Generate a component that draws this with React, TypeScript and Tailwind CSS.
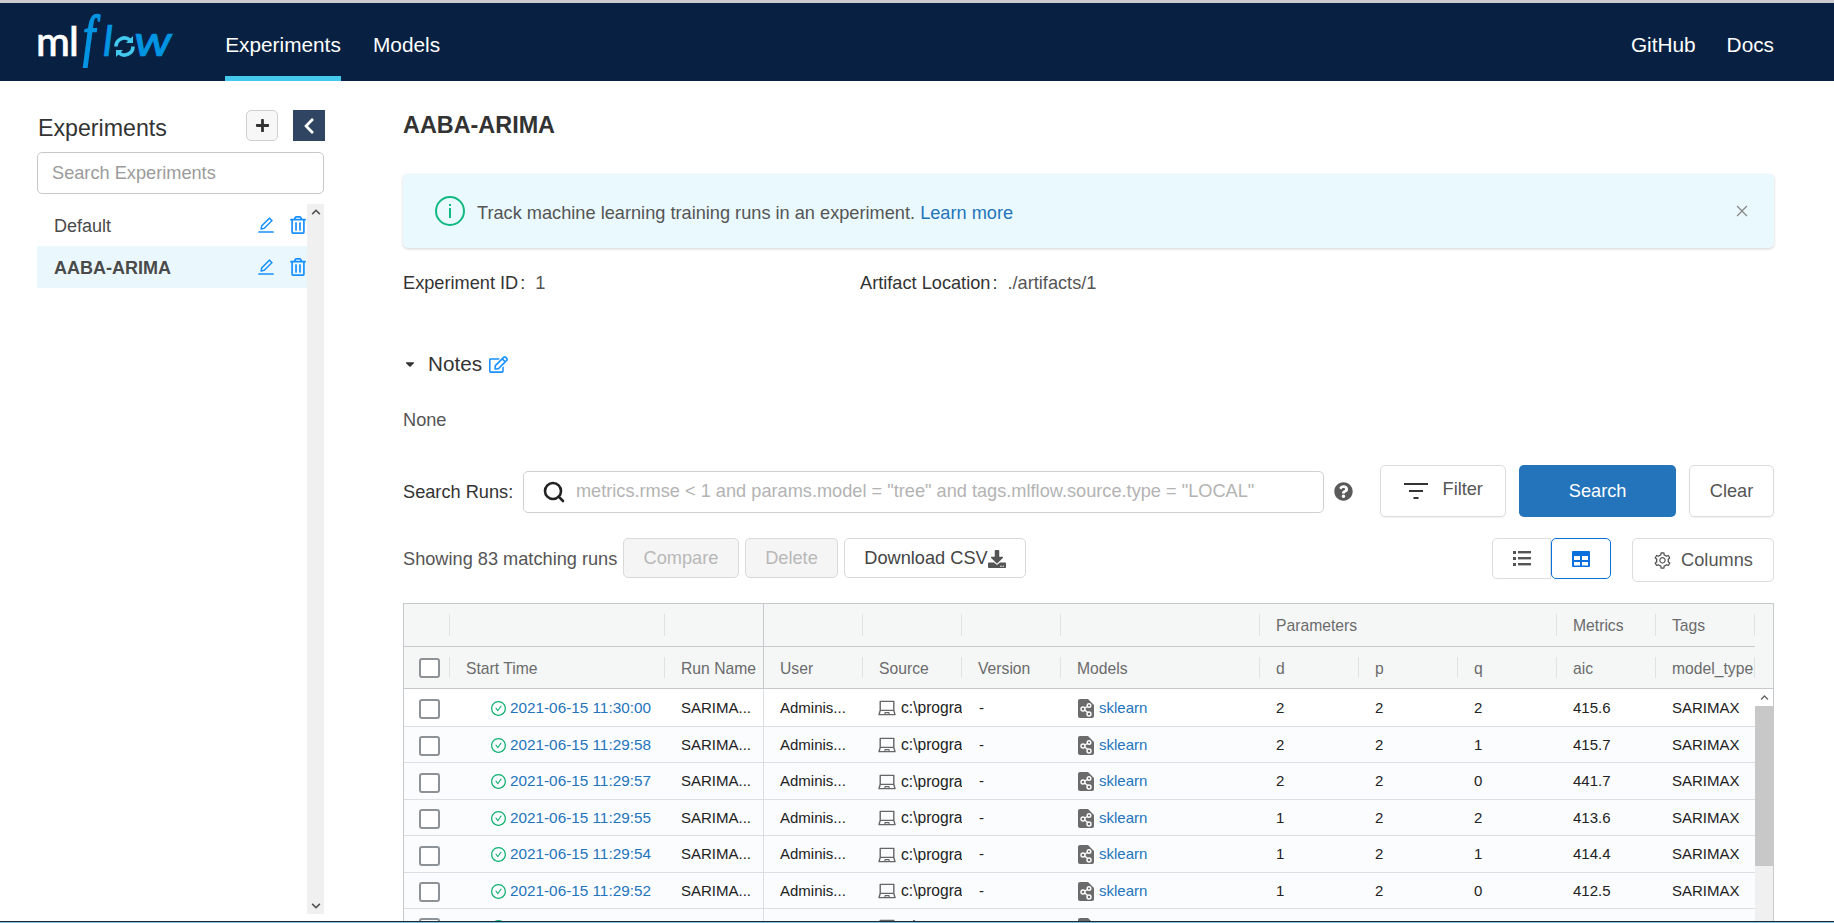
import { FaChevronLeft, FaChevronUp, FaChevronDown, FaPlus, FaQuestionCircle, FaRegEdit, FaRegTrashAlt, FaDownload, FaCaretDown } from "react-icons/fa";
import { AiOutlineCheckCircle, AiOutlineClose, AiOutlineEdit, AiOutlineLaptop, AiOutlineSetting } from "react-icons/ai";
import { Search } from "lucide-react";

const font = "font-['Liberation_Sans',Arial,sans-serif]";
const cols = "grid grid-cols-[46px_215px_99px_99px_99px_99px_199px_99px_99px_99px_99px_99px]";

const runs = [
  { time: "2021-06-15 11:30:00", d: "2", p: "2", q: "2", aic: "415.6", h: "h-[38px]" },
  { time: "2021-06-15 11:29:58", d: "2", p: "2", q: "1", aic: "415.7", h: "h-[36px]" },
  { time: "2021-06-15 11:29:57", d: "2", p: "2", q: "0", aic: "441.7", h: "h-[37px]" },
  { time: "2021-06-15 11:29:55", d: "1", p: "2", q: "2", aic: "413.6", h: "h-[36px]" },
  { time: "2021-06-15 11:29:54", d: "1", p: "2", q: "1", aic: "414.4", h: "h-[37px]" },
  { time: "2021-06-15 11:29:52", d: "1", p: "2", q: "0", aic: "412.5", h: "h-[36px]" },
  { time: "2021-06-15 11:29:50", d: "1", p: "2", q: "0", aic: "412.1", h: "h-[36px]" },
];

function Logo() {
  return (
    <svg width="150" height="60" viewBox="0 0 150 60" className="ml-[30px] mt-[-1px] shrink-0">
      <text x="6" y="44" fontFamily="Lato, sans-serif" fontWeight="500" fontSize="41" letterSpacing="-1" fill="#ffffff" stroke="#ffffff" strokeWidth="0.6">ml</text>
      <text transform="translate(53,43) scale(0.75,1)" fontFamily="Liberation Serif, serif" fontStyle="italic" fontSize="58" fill="#0194e2" stroke="#0194e2" strokeWidth="1.8">f</text>
      <text x="73" y="44" fontFamily="Lato, sans-serif" fontStyle="italic" fontWeight="500" fontSize="42" fill="#0194e2" stroke="#0194e2" strokeWidth="0.6">l</text>
      <g fill="none" stroke="#43c9ed" strokeWidth="3.6">
        <path d="M86 34.5a8.5 8.5 0 0 1 14-6.5" />
        <path d="M103 34.5a8.5 8.5 0 0 1-14 6.5" />
      </g>
      <path d="M103 24v7h-7z" fill="#43c9ed" />
      <path d="M86 45v-7h7z" fill="#43c9ed" />
      <text x="104" y="44" fontFamily="Lato, sans-serif" fontStyle="italic" fontWeight="500" fontSize="42" fill="#0194e2" stroke="#0194e2" strokeWidth="0.6" textLength="38" lengthAdjust="spacingAndGlyphs">w</text>
    </svg>
  );
}

function ModelIcon() {
  return (
    <svg width="16" height="19" viewBox="0 0 16 19" className="shrink-0">
      <path d="M2 0h8l6 6v11a2 2 0 0 1-2 2H2a2 2 0 0 1-2-2V2a2 2 0 0 1 2-2z" fill="#6b6b6b" />
      <g stroke="#fff" strokeWidth="1.4" fill="#6b6b6b">
        <path d="M6 9.5l5-3M6 10.5l5 4" fill="none" />
        <circle cx="5" cy="10" r="2" />
        <circle cx="11" cy="6.5" r="1.8" />
        <circle cx="11" cy="15" r="2" />
      </g>
    </svg>
  );
}

function FilterIcon() {
  return (
    <svg width="24" height="17" viewBox="0 0 24 17" className="shrink-0">
      <rect x="0" y="0" width="24" height="2" fill="#333" />
      <rect x="5" y="7" width="14" height="2" fill="#333" />
      <rect x="9.5" y="14" width="5" height="2" fill="#333" />
    </svg>
  );
}

function ListIcon() {
  return (
    <svg width="18" height="15" viewBox="0 0 18 15">
      <rect x="0" y="0" width="3" height="3" fill="#555" />
      <rect x="5" y="0" width="13" height="2.4" fill="#555" />
      <rect x="0" y="6" width="3" height="3" fill="#555" />
      <rect x="5" y="6" width="13" height="2.4" fill="#555" />
      <rect x="0" y="12" width="3" height="3" fill="#555" />
      <rect x="5" y="12" width="13" height="2.4" fill="#555" />
    </svg>
  );
}

function TableIcon() {
  return (
    <svg width="18" height="16" viewBox="0 0 18 16">
      <rect x="0" y="0" width="18" height="16" rx="1" fill="#0b6fdc" />
      <rect x="2" y="5" width="6" height="4" fill="#fff" />
      <rect x="10" y="5" width="6" height="4" fill="#fff" />
      <rect x="2" y="11" width="6" height="3.5" fill="#fff" />
      <rect x="10" y="11" width="6" height="3.5" fill="#fff" />
    </svg>
  );
}

function Checkbox() {
  return <div className="w-[21px] h-[20px] border-2 border-[#8d9296] rounded-[3px] bg-white" />;
}

function HeadCell({ label, last }: { label?: string; last?: boolean }) {
  return (
    <div className="relative flex items-center pl-[16px] pt-[2px] text-[#6b6b6b] whitespace-nowrap overflow-hidden">
      {label}
      {!last && <div className="absolute right-0 top-[10px] bottom-[10px] w-px bg-[#dfe3e5]" />}
    </div>
  );
}

function HeadCellFull({ label }: { label: string }) {
  return (
    <div className="relative h-full flex items-center pl-[16px] pt-[2px] text-[#6b6b6b]">
      {label}
      <div className="absolute right-0 top-[10px] bottom-[10px] w-px bg-[#dfe3e5]" />
    </div>
  );
}

function ExperimentRow({ name, active }: { name: string; active?: boolean }) {
  return (
    <div className={`h-[42px] flex items-center pl-[17px] pr-[1px] text-[18px] text-[#4a4a4a] ${active ? "bg-[#eaf8fd] font-bold" : ""}`}>
      <span className="flex-1 pt-[2px]">{name}</span>
      <AiOutlineEdit className="text-[#1890ff] w-[20px] h-[20px] mr-[14px]" />
      <FaRegTrashAlt className="text-[#1890ff] w-[16px] h-[18px]" />
    </div>
  );
}

export default function App() {
  return (
    <div className={`${font} h-[923px] flex flex-col overflow-hidden bg-white text-[18.2px] text-[#333]`}>
      <div className="h-[3px] bg-[#c9cbce]" />
      <header className="h-[78px] bg-[#082142] flex items-center text-white text-[20.8px]">
        <Logo />
        <nav className="ml-[45px] h-full flex">
          <div className="w-[116px] flex items-center justify-center border-b-[5px] border-[#43c9ed] pt-[11px]">Experiments</div>
          <div className="ml-[32px] flex items-center pt-[5px]">Models</div>
        </nav>
        <div className="ml-auto mr-[60px] flex gap-[31px] pt-[5px]">
          <span>GitHub</span>
          <span>Docs</span>
        </div>
      </header>

      <div className="flex-1 min-h-0 flex">
        <aside className="w-[325px] pl-[37px] pt-[29px] shrink-0">
          <div className="h-[31px] flex items-center">
            <h1 className="text-[23.2px] text-[#333] flex-1 pl-px pt-[5px]">Experiments</h1>
            <button className="w-[32px] h-[31px] flex items-center justify-center bg-[#f7f7f7] border border-[#cfcfcf] rounded-[5px] text-[#333]">
              <FaPlus className="w-[15px] h-[15px]" />
            </button>
            <button className="ml-[15px] w-[32px] h-[31px] flex items-center justify-center bg-[#2f4562] text-white">
              <FaChevronLeft className="w-[18px] h-[18px]" />
            </button>
          </div>
          <div className="mt-[11px] w-[287px] h-[42px] border border-[#c9c9c9] rounded-[5px] flex items-center pl-[14px] pt-[1px] text-[18.2px] text-[#9b9b9b]">
            Search Experiments
          </div>
          <div className="mt-[10px] w-[287px] h-[710px] flex">
            <div className="w-[270px]">
              <ExperimentRow name="Default" />
              <ExperimentRow name="AABA-ARIMA" active />
            </div>
            <div className="w-[17px] bg-[#f0f0f0] flex flex-col items-center justify-between py-[3px] text-[#555]">
              <FaChevronUp className="w-[10px] h-[10px]" />
              <FaChevronDown className="w-[10px] h-[10px]" />
            </div>
          </div>
        </aside>

        <main className="ml-[78px] w-[1371px] pt-[28px]">
          <h2 className="h-[32px] flex items-center pt-[2px] text-[23.4px] font-bold text-[#333]">AABA-ARIMA</h2>

          <div className="mt-[33px] h-[74px] flex items-center bg-[#eaf9fe] rounded-[5px] shadow-[0_1px_3px_rgba(0,0,0,0.18)] pl-[32px] pr-[24px]">
            <div className="w-[30px] h-[30px] rounded-full border-[2.5px] border-[#10b981] flex flex-col items-center justify-center gap-[2px]">
              <div className="w-[2px] h-[2px] bg-[#10b981]" />
              <div className="w-[2px] h-[10px] bg-[#10b981]" />
            </div>
            <span className="ml-[12px] pt-[6px] text-[#555]">
              Track machine learning training runs in an experiment. <span className="text-[#2374bb]">Learn more</span>
            </span>
            <AiOutlineClose className="ml-auto w-[16px] h-[16px] text-[#888]" />
          </div>

          <div className="mt-[23px] h-[24px] flex items-center pt-[1px]">
            <div className="w-[457px] whitespace-pre">Experiment ID<span className="ml-[2px]">:</span><span className="ml-[10px] text-[#555]">1</span></div>
            <div className="whitespace-pre">Artifact Location<span className="ml-[2px]">:</span><span className="ml-[10px] text-[#555]">./artifacts/1</span></div>
          </div>

          <div className="mt-[55px] h-[28px] flex items-center">
            <FaCaretDown className="w-[14px] h-[14px] text-[#333]" />
            <span className="ml-[11px] text-[20.7px] text-[#333]">Notes</span>
            <FaRegEdit className="ml-[7px] w-[19px] h-[19px] text-[#1890ff]" />
          </div>

          <div className="mt-[30px] h-[24px] flex items-center pt-[2px] text-[#555]">None</div>

          <div className="mt-[33px] h-[52px] flex items-center">
            <span className="w-[120px] whitespace-nowrap pt-[3px] text-[#333]">Search Runs:</span>
            <div className="w-[802px] h-[42px] border border-[#cfcfcf] rounded-[5px] flex items-center pl-[18px] mt-[1px]">
              <Search className="w-[24px] h-[24px] text-[#222]" strokeWidth={2.6} />
              <span className="ml-[10px] text-[#b3b3b3] whitespace-nowrap">metrics.rmse &lt; 1 and params.model = "tree" and tags.mlflow.source.type = "LOCAL"</span>
            </div>
            <FaQuestionCircle className="ml-[10px] w-[19px] h-[19px] text-[#5a5a5a]" />
            <button className="ml-[27px] w-[126px] h-[52px] border border-[#dcdcdc] rounded-[5px] shadow-[0_1px_2px_rgba(0,0,0,0.06)] flex items-center justify-center gap-[15px] text-[#555]">
              <FilterIcon />
              <span className="pb-[3px]">Filter</span>
            </button>
            <button className="ml-[13px] w-[157px] h-[52px] pt-[2px] bg-[#2374bb] text-white rounded-[5px]">Search</button>
            <button className="ml-[13px] w-[85px] h-[52px] pt-[2px] border border-[#dcdcdc] rounded-[5px] shadow-[0_1px_2px_rgba(0,0,0,0.06)] text-[#555]">Clear</button>
          </div>

          <div className="mt-[21px] h-[44px] flex items-start">
            <span className="w-[220px] h-[40px] pt-[3px] flex items-center whitespace-nowrap text-[#555]">Showing 83 matching runs</span>
            <button className="w-[116px] h-[40px] pt-[2px] bg-[#f5f5f5] border border-[#d9d9d9] rounded-[5px] text-[#b8b8b8]">Compare</button>
            <button className="ml-[6px] w-[93px] h-[40px] pt-[2px] bg-[#f5f5f5] border border-[#d9d9d9] rounded-[5px] text-[#b8b8b8]">Delete</button>
            <button className="ml-[6px] w-[182px] h-[40px] pt-[2px] border border-[#d9d9d9] rounded-[5px] flex items-center justify-center text-[#444]">
              Download CSV
              <FaDownload className="w-[18px] h-[18px] text-[#555]" />
            </button>
            <button className="ml-auto w-[59px] h-[41px] border border-[#dcdcdc] rounded-l-[5px] flex items-center justify-center">
              <ListIcon />
            </button>
            <button className="w-[60px] h-[41px] border border-[#0b6fdc] rounded-[5px] flex items-center justify-center">
              <TableIcon />
            </button>
            <button className="ml-[21px] w-[142px] h-[44px] pt-[1px] border border-[#dcdcdc] rounded-[5px] flex items-center justify-center gap-[9px] text-[#555]">
              <AiOutlineSetting className="w-[19px] h-[19px]" />
              Columns
            </button>
          </div>

          <div className="mt-[21px] border border-[#c6cacc] text-[15.7px]">
            <div className="flex bg-[#f5f7f7] h-[43px]">
              <div className={`${cols} h-full border-b border-[#c6cacc]`}>
                <HeadCell />
                <HeadCell />
                <div className="relative border-r border-[#c6cacc]" />
                <HeadCell />
                <HeadCell />
                <HeadCell />
                <HeadCell />
                <div className="col-span-3">
                  <HeadCellFull label="Parameters" />
                </div>
                <HeadCell label="Metrics" />
                <HeadCell label="Tags" />
              </div>
            </div>
            <div className="flex bg-[#f5f7f7] h-[42px] border-b border-[#c6cacc]">
              <div className={`${cols} h-full`}>
                <div className="relative flex items-center pl-[15px]">
                  <Checkbox />
                  <div className="absolute right-0 top-[10px] bottom-[10px] w-px bg-[#dfe3e5]" />
                </div>
                <HeadCell label="Start Time" />
                <div className="flex items-center pl-[16px] pt-[2px] text-[#6b6b6b] whitespace-nowrap border-r border-[#c6cacc]">Run Name</div>
                <HeadCell label="User" />
                <HeadCell label="Source" />
                <HeadCell label="Version" />
                <HeadCell label="Models" />
                <HeadCell label="d" />
                <HeadCell label="p" />
                <HeadCell label="q" />
                <HeadCell label="aic" />
                <HeadCell label="model_type" />
              </div>
            </div>
            <div className="flex text-[15px]">
              <div className="w-[1351px] shrink-0">
                {runs.map((run, i) => (
                  <div key={run.time} className={`${cols} ${run.h} border-b border-[#dcdfe1] text-[#222] ${i === 0 ? "bg-white" : "bg-[#fafcfe]"}`}>
                    <div className="flex items-center pl-[15px] pt-[3px]"><Checkbox /></div>
                    <div className="flex items-center pl-[40px] pt-[1px] gap-[3px] whitespace-nowrap">
                      <AiOutlineCheckCircle className="w-[17px] h-[17px] text-[#10b070] shrink-0" />
                      <span className="text-[15.3px] text-[#2374bb]">{run.time}</span>
                    </div>
                    <div className="flex items-center pl-[16px] pt-[1px] border-r border-[#dcdfe1]">SARIMA...</div>
                    <div className="flex items-center pl-[16px] pt-[1px]">Adminis...</div>
                    <div className="flex items-center pl-[14px] pt-[1px] gap-[4px] overflow-hidden whitespace-nowrap">
                      <AiOutlineLaptop className="w-[20px] h-[20px] text-[#666] shrink-0" />
                      <span className="text-[15.6px]">c:\program</span>
                    </div>
                    <div className="flex items-center pl-[17px] pt-[1px]">-</div>
                    <div className="flex items-center pl-[17px] pt-[1px] gap-[5px]">
                      <ModelIcon />
                      <span className="text-[#2374bb]">sklearn</span>
                    </div>
                    <div className="flex items-center pl-[16px] pt-[1px]">{run.d}</div>
                    <div className="flex items-center pl-[16px] pt-[1px]">{run.p}</div>
                    <div className="flex items-center pl-[16px] pt-[1px]">{run.q}</div>
                    <div className="flex items-center pl-[16px] pt-[1px]">{run.aic}</div>
                    <div className="flex items-center pl-[16px] pt-[1px]">SARIMAX</div>
                  </div>
                ))}
              </div>
              <div className="flex-1 bg-[#f0f0f0] flex flex-col">
                <div className="h-[17px] bg-white flex items-center justify-center text-[#666]">
                  <FaChevronUp className="w-[9px] h-[9px]" />
                </div>
                <div className="h-[160px] bg-[#c8c8c8]" />
              </div>
            </div>
          </div>
        </main>
      </div>

      <div className="h-px bg-[#1f2a33] shrink-0" />
      <div className="h-px bg-[#7cc0ea] shrink-0" />
    </div>
  );
}
